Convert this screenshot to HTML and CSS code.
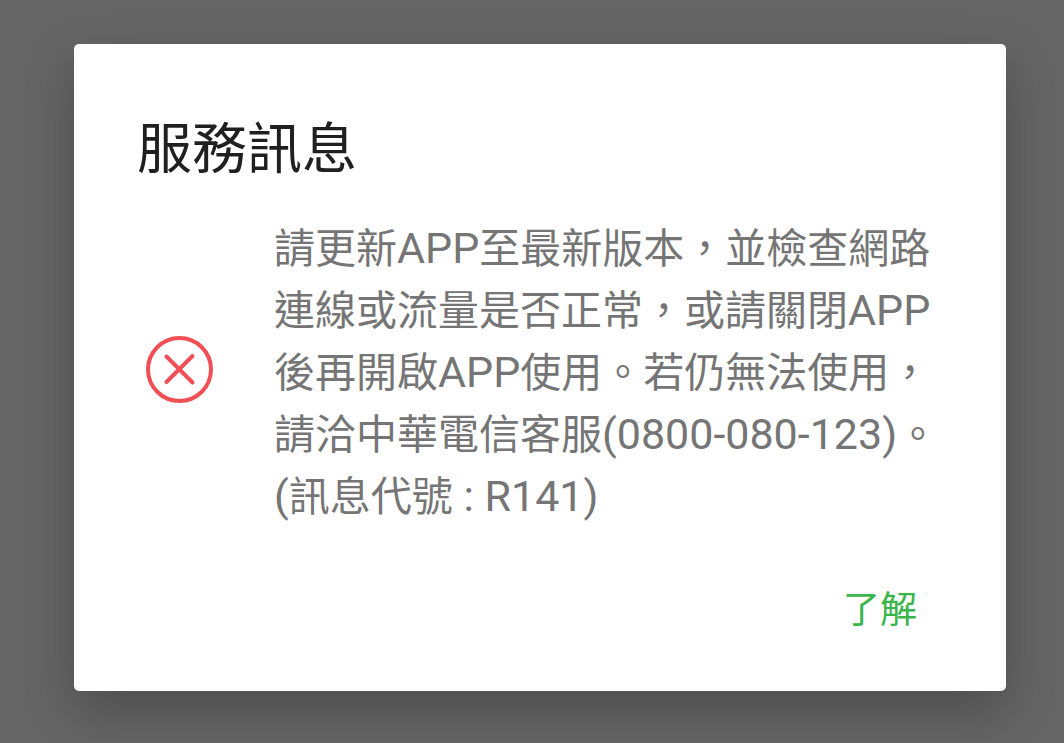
FILE: index.html
```html
<!DOCTYPE html>
<html lang="zh-Hant">
<head>
    <meta charset="UTF-8">
    <meta name="viewport" content="width=device-width, initial-scale=1.0">
    <title>服務訊息</title>
    <link rel="stylesheet" href="styles.css">
</head>
<body>

<main class="dialog" role="alertdialog" aria-labelledby="titulo" aria-describedby="mensaje">
    <h1 class="dialog-title" id="titulo">服務訊息</h1>

    <div class="dialog-content">
        <svg class="dialog-icon" viewBox="0 0 68 68" aria-hidden="true">
            <circle cx="34.5" cy="33.5" r="31.5"/>
            <path d="M21.5 20.5 L47.5 46.5 M47.5 20 L21.5 46"/>
        </svg>
        <p class="dialog-text" id="mensaje">請更新<span class="latin">APP</span>至最新版本，並檢查網路連線或流量是否正常，或請關閉<span class="latin">APP</span>後再開啟<span class="latin">APP</span>使用。若仍無法使用，請洽中華電信客服<span class="latin">(0800-080-123)</span>。<br><span class="latin">(</span>訊息代號<span class="latin"> : R141)</span></p>
    </div>

    <div class="dialog-actions">
        <button type="button" class="btn">了解</button>
    </div>
</main>

</body>
</html>
```

FILE: styles.css
```css
* {
    box-sizing: border-box;
}

body {
    margin: 0;
    padding: 44px 58px 52px 74px;
    min-height: 100vh;
    background-color: #656565;
    font-family: Roboto, "Noto Sans CJK TC", sans-serif;
}

.dialog {
    padding: 65px 64px 40px 63px;
    background-color: #fff;
    border-radius: 5px;
    box-shadow: 0 20px 50px rgba(0, 0, 0, 0.24);
}

.dialog-title {
    margin: 0;
    color: #202020;
    font-size: 55px;
    font-weight: 400;
    line-height: 80px;
}

.dialog-content {
    display: flex;
    align-items: center;
    gap: 61px;
    margin-top: 23px;
    padding-left: 8px;
}

.dialog-icon {
    flex: none;
    width: 68px;
    height: 68px;
    fill: none;
    stroke: #f05055;
    stroke-width: 4;
    stroke-linecap: round;
}

.dialog-text {
    flex: 1;
    margin: 0;
    padding-top: 6px;
    color: #757575;
    font-size: 41px;
    line-height: 62px;
}

/* Roboto se ve más pequeña que los caracteres chinos */
.latin {
    font-size: 43px;
    line-height: 1;
}

.dialog-actions {
    display: flex;
    justify-content: flex-end;
    margin-top: 43px;
    padding-right: 9px;
}

.btn {
    padding: 12px 16px;
    border: none;
    background: none;
    color: #39b54a;
    font-family: inherit;
    font-size: 37px;
    line-height: 56px;
    cursor: pointer;
}
```
